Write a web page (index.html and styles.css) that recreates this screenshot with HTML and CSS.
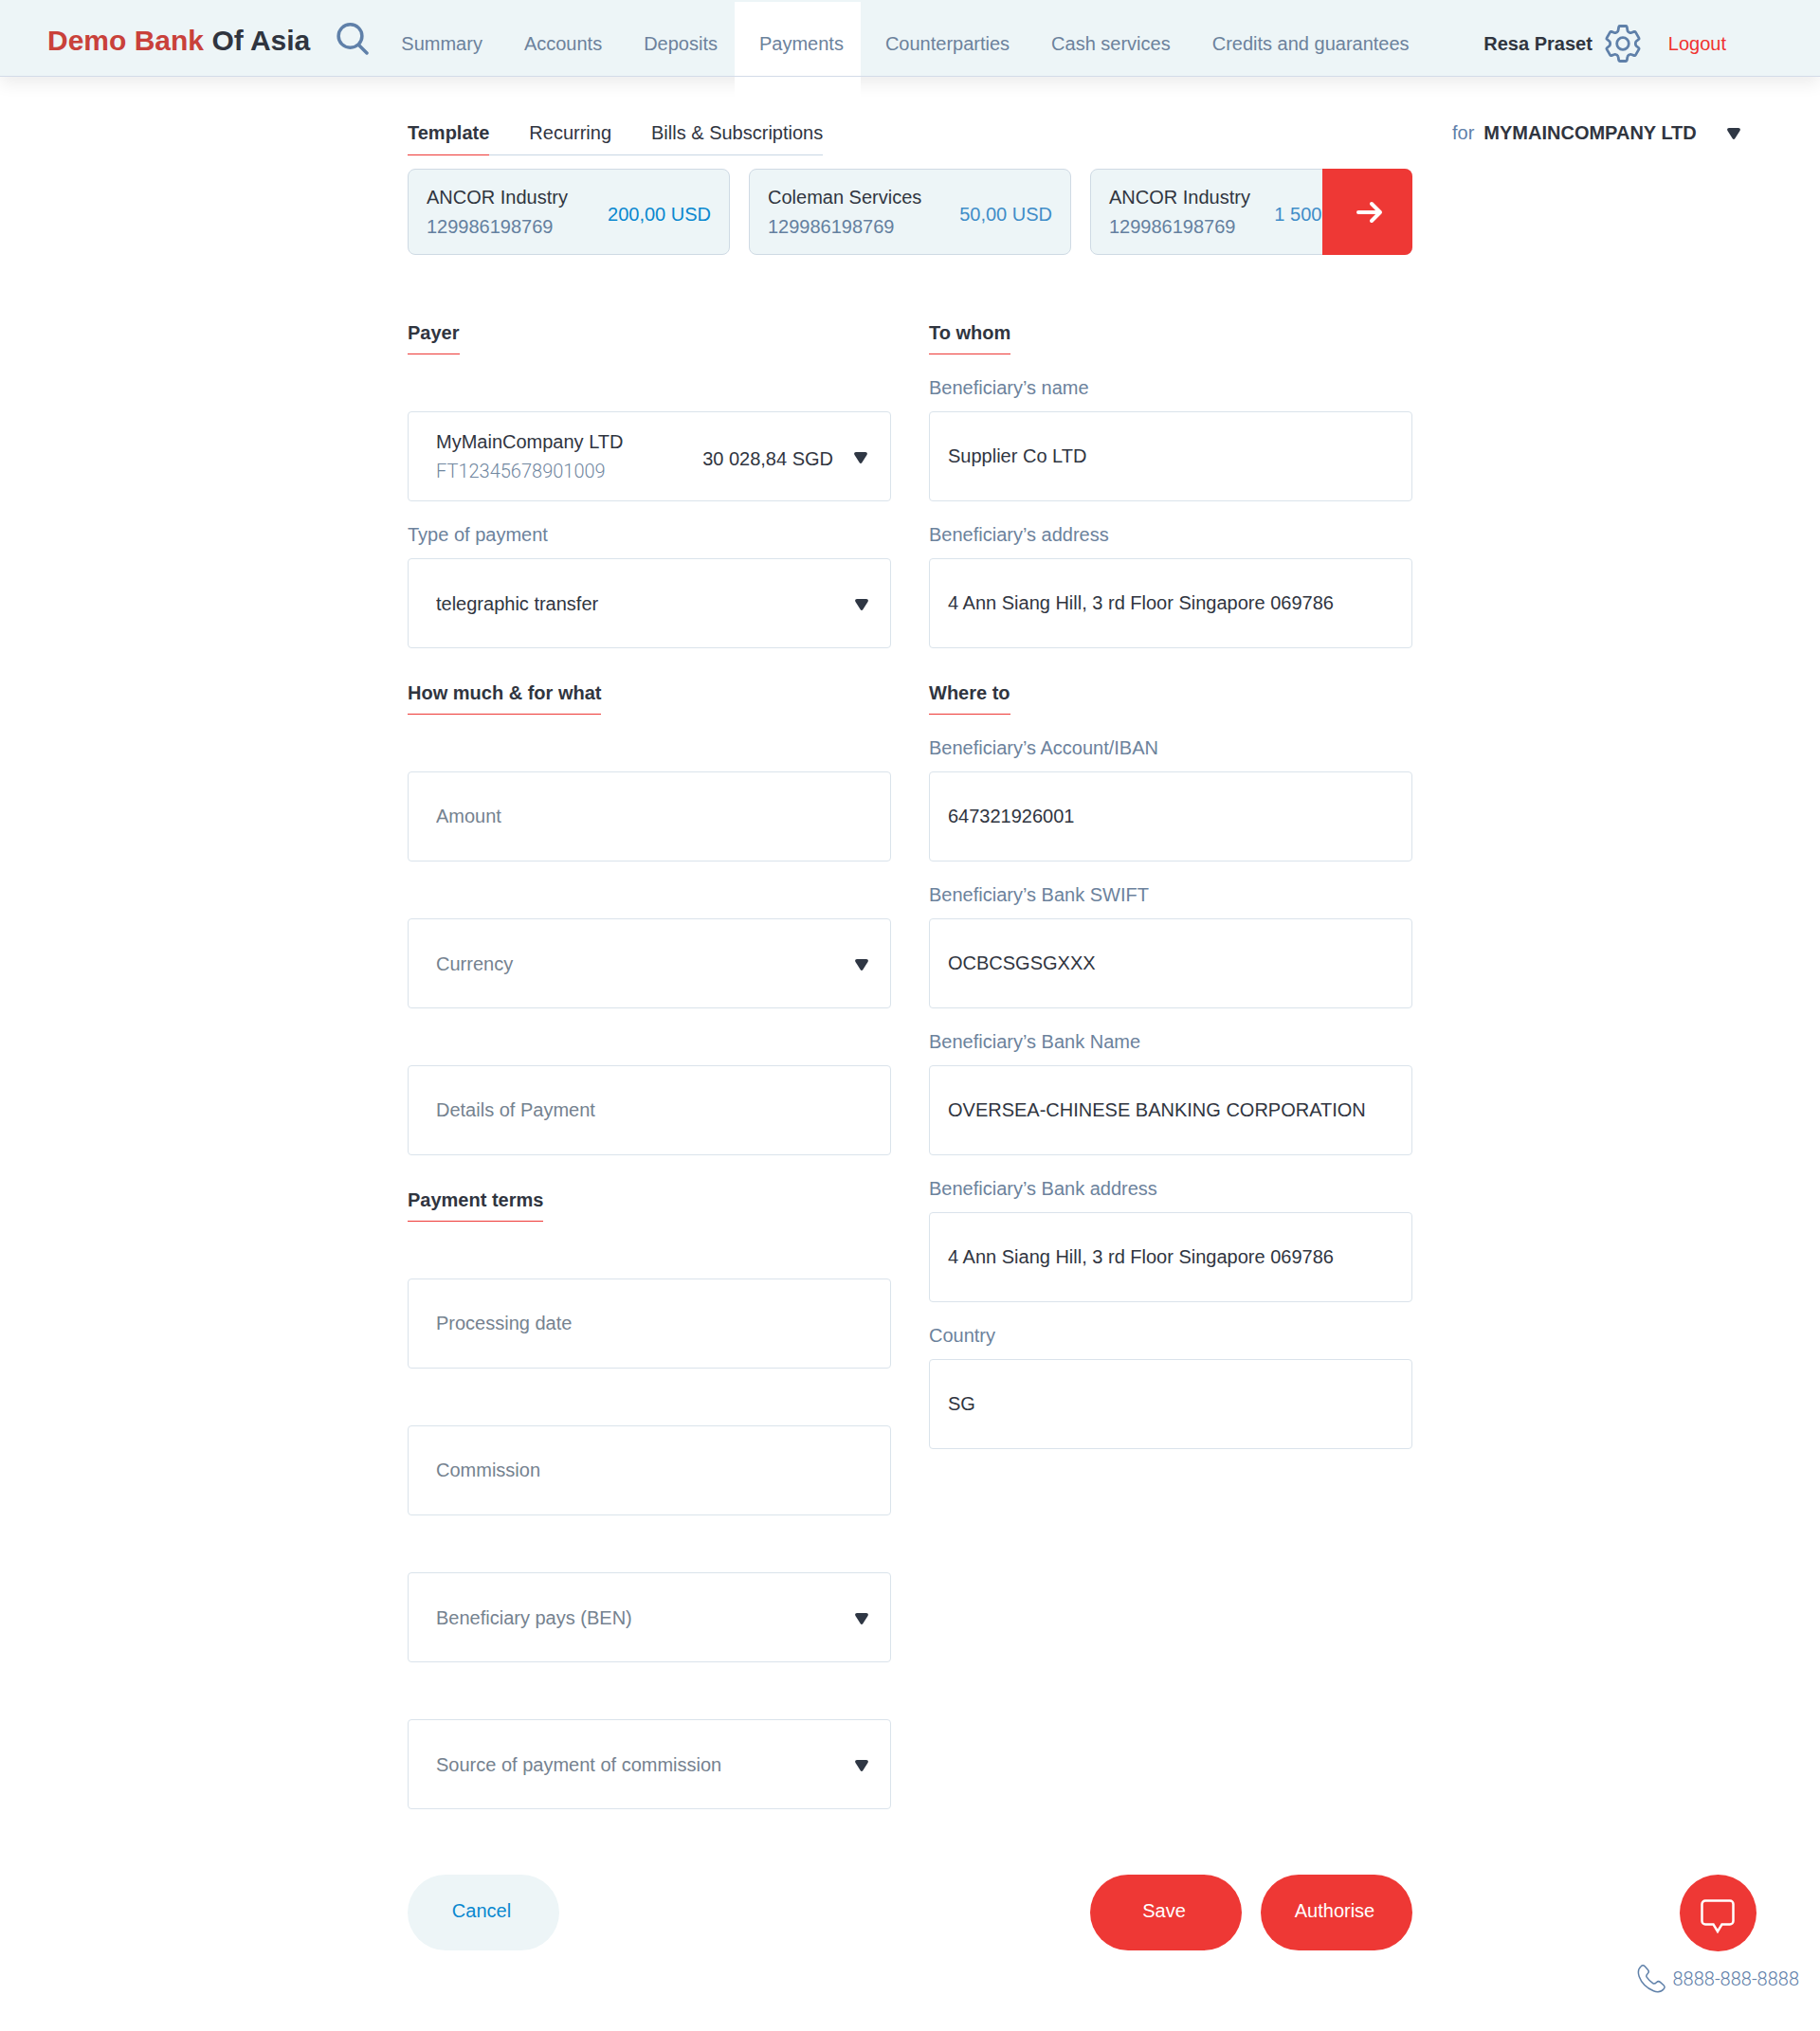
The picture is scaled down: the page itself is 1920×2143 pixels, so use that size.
FILE: index.html
```html
<!DOCTYPE html>
<html lang="en">
<head>
<meta charset="utf-8">
<meta name="viewport" content="width=device-width, initial-scale=1">
<title>Payments – Demo Bank Of Asia</title>
<link rel="stylesheet" href="styles.css">
</head>
<body>
<svg class="sprite" width="0" height="0" aria-hidden="true">
  <symbol id="caret" viewBox="0 0 14 12"><path d="M2 0h10c1.600 0 2.400 1.600 1.500 2.900L8.400 11c-.7 1.200-2.100 1.200-2.800 0L.5 2.900C-.4 1.600.4 0 2 0z"/></symbol>
</svg>

<header class="topbar">
  <div class="topbar__brand">
    <a class="brand" href="#"><span class="brand__accent">Demo Bank</span> Of Asia</a>
    <button class="icon-button" type="button" aria-label="Search">
      <svg width="34" height="38" viewBox="0 0 34 38" fill="none" stroke="currentColor" stroke-width="3.500" stroke-linecap="round"><ellipse cx="14.500" cy="14" rx="12.400" ry="12.200"/><path d="M23.500 23.500l8.500 8.500"/></svg>
    </button>
  </div>
  <nav class="mainnav" aria-label="Main">
    <a class="mainnav__link" href="#">Summary</a>
    <a class="mainnav__link" href="#">Accounts</a>
    <a class="mainnav__link" href="#">Deposits</a>
    <a class="mainnav__link mainnav__link--active" href="#" aria-current="page">Payments</a>
    <a class="mainnav__link" href="#">Counterparties</a>
    <a class="mainnav__link" href="#">Cash services</a>
    <a class="mainnav__link" href="#">Credits and guarantees</a>
  </nav>
  <div class="user">
    <span class="user__name">Resa Praset</span>
    <button class="icon-button" type="button" aria-label="Settings">
      <svg width="40" height="40" viewBox="0 0 40 40" fill="none" stroke="currentColor" stroke-width="2.800" stroke-linejoin="round"><path d="M16.800 1.500h6.400c.6 0 1 .3 1.100.9l.6 3.600c.1.800.4 1.300 1 1.700l1.200.7c.6.400 1.200.4 1.900.1l3-1.100c.6-.2 1.100 0 1.400.5l3.600 6.200c.3.500.2 1-.3 1.400l-2.500 2c-.6.500-.8 1-.8 1.700v1.600c0 .7.200 1.200.8 1.700l2.500 2c.5.400.6.900.3 1.400l-3.600 6.200c-.3.500-.8.700-1.400.5l-3-1.100c-.7-.3-1.300-.3-1.900.1l-1.200.7c-.6.400-.9.900-1 1.700l-.6 3.600c-.1.600-.5.900-1.100.9h-6.400c-.6 0-1-.3-1.100-.9l-.6-3.600c-.1-.8-.4-1.300-1-1.700l-1.200-.7c-.6-.4-1.200-.4-1.900-.1l-3 1.100c-.6.200-1.100 0-1.400-.5L3 25.900c-.3-.5-.2-1 .3-1.400l2.500-2c.6-.5.8-1 .8-1.700v-1.600c0-.7-.2-1.200-.8-1.700l-2.500-2c-.5-.4-.6-.9-.3-1.400l3.600-6.200c.3-.5.800-.7 1.400-.5l3 1.100c.7.300 1.300.3 1.900-.1l1.200-.7c.6-.4.900-.9 1-1.700l.6-3.600c.1-.6.500-.9 1.100-.9z"/><circle cx="20" cy="20" r="6.300"/></svg>
    </button>
    <a class="user__logout" href="#">Logout</a>
  </div>
</header>

<main class="page">
  <form class="payment">
    <div class="tabs">
      <a class="tabs__item tabs__item--active" href="#">Template</a>
      <a class="tabs__item" href="#">Recurring</a>
      <a class="tabs__item" href="#">Bills &amp; Subscriptions</a>
    </div>

    <div class="templates">
      <a class="card" href="#">
        <span class="account"><span>ANCOR Industry</span><span class="account__number">129986198769</span></span>
        <span class="amount amount--bright">200,00 USD</span>
      </a>
      <a class="card" href="#">
        <span class="account"><span>Coleman Services</span><span class="account__number">129986198769</span></span>
        <span class="amount">50,00 USD</span>
      </a>
      <a class="card" href="#">
        <span class="account"><span>ANCOR Industry</span><span class="account__number">129986198769</span></span>
        <span class="amount">1 500,00 USD</span>
      </a>
      <button class="templates__next" type="button" aria-label="More templates">
        <svg width="32" height="24" viewBox="0 0 32 24" fill="none" stroke="currentColor" stroke-width="4" stroke-linecap="round" stroke-linejoin="round"><path d="M4 12h23M18 3l9 9-9 9"/></svg>
      </button>
    </div>

    <div class="columns">
      <div class="column column--payer">
        <h2 class="section"><span class="section__text">Payer</span></h2>
        <div class="field">
          <div class="control account-box">
            <span class="account"><span>MyMainCompany LTD</span><span class="account__iban">FT12345678901009</span></span>
            <span class="amount amount--dark">30 028,84 SGD</span>
            <select class="account-box__select" aria-label="Payer account"><option>MyMainCompany LTD</option></select>
            <svg class="caret" aria-hidden="true"><use href="#caret"/></svg>
          </div>
        </div>
        <div class="field">
          <label class="field__label" for="type">Type of payment</label>
          <div class="control">
            <select class="input" id="type"><option>telegraphic transfer</option></select>
            <svg class="caret" aria-hidden="true"><use href="#caret"/></svg>
          </div>
        </div>

        <h2 class="section"><span class="section__text">How much &amp; for what</span></h2>
        <div class="field">
          <div class="control"><input class="input" type="text" placeholder="Amount" aria-label="Amount"></div>
        </div>
        <div class="field">
          <div class="control">
            <select class="input input--empty" aria-label="Currency"><option>Currency</option></select>
            <svg class="caret" aria-hidden="true"><use href="#caret"/></svg>
          </div>
        </div>
        <div class="field">
          <div class="control"><input class="input" type="text" placeholder="Details of Payment" aria-label="Details of Payment"></div>
        </div>

        <h2 class="section"><span class="section__text">Payment terms</span></h2>
        <div class="field">
          <div class="control"><input class="input" type="text" placeholder="Processing date" aria-label="Processing date"></div>
        </div>
        <div class="field">
          <div class="control"><input class="input" type="text" placeholder="Commission" aria-label="Commission"></div>
        </div>
        <div class="field">
          <div class="control">
            <select class="input input--empty" aria-label="Who pays the commission"><option>Beneficiary pays (BEN)</option></select>
            <svg class="caret" aria-hidden="true"><use href="#caret"/></svg>
          </div>
        </div>
        <div class="field">
          <div class="control">
            <select class="input input--empty" aria-label="Source of payment of commission"><option>Source of payment of commission</option></select>
            <svg class="caret" aria-hidden="true"><use href="#caret"/></svg>
          </div>
        </div>
      </div>

      <div class="column column--beneficiary">
        <h2 class="section"><span class="section__text">To whom</span></h2>
        <div class="field">
          <label class="field__label" for="b-name">Beneficiary’s name</label>
          <div class="control"><input class="input" id="b-name" type="text" value="Supplier Co LTD"></div>
        </div>
        <div class="field">
          <label class="field__label" for="b-address">Beneficiary’s address</label>
          <div class="control"><input class="input" id="b-address" type="text" value="4 Ann Siang Hill, 3 rd Floor Singapore 069786"></div>
        </div>

        <h2 class="section"><span class="section__text">Where to</span></h2>
        <div class="field">
          <label class="field__label" for="b-iban">Beneficiary’s Account/IBAN</label>
          <div class="control"><input class="input" id="b-iban" type="text" value="647321926001"></div>
        </div>
        <div class="field">
          <label class="field__label" for="b-swift">Beneficiary’s Bank SWIFT</label>
          <div class="control"><input class="input" id="b-swift" type="text" value="OCBCSGSGXXX"></div>
        </div>
        <div class="field">
          <label class="field__label" for="b-bank">Beneficiary’s Bank Name</label>
          <div class="control"><input class="input" id="b-bank" type="text" value="OVERSEA-CHINESE BANKING CORPORATION"></div>
        </div>
        <div class="field">
          <label class="field__label" for="b-bank-address">Beneficiary’s Bank address</label>
          <div class="control"><input class="input" id="b-bank-address" type="text" value="4 Ann Siang Hill, 3 rd Floor Singapore 069786"></div>
        </div>
        <div class="field">
          <label class="field__label" for="b-country">Country</label>
          <div class="control"><input class="input" id="b-country" type="text" value="SG"></div>
        </div>
      </div>
    </div>

    <div class="actions">
      <button class="button button--light" type="button">Cancel</button>
      <button class="button" type="button">Save</button>
      <button class="button" type="submit">Authorise</button>
    </div>
  </form>

  <aside class="side">
    <div class="company">
      <label class="company__label" for="company">for</label>
      <div class="company__control">
        <select class="company__select" id="company"><option>MYMAINCOMPANY LTD</option></select>
        <svg class="caret caret--company" aria-hidden="true"><use href="#caret"/></svg>
      </div>
    </div>
    <div class="contact">
      <button class="contact__chat" type="button" aria-label="Open chat">
        <svg width="36" height="36" viewBox="0 0 36 36" fill="none" stroke="currentColor" stroke-width="2.500" stroke-linejoin="miter"><path d="M5 1.500h26a3.500 3.500 0 0 1 3.500 3.500v18a3.500 3.500 0 0 1-3.500 3.500h-8.500L18 34l-4.500-7.500H5A3.500 3.500 0 0 1 1.500 23V5A3.500 3.500 0 0 1 5 1.500z"/></svg>
      </button>
      <a class="contact__phone" href="tel:88888888888">
        <svg width="30" height="30" viewBox="0 0 30 30" fill="none" stroke="currentColor" stroke-width="1.500" stroke-linejoin="round"><path d="M4.200 1.800c1.200-1.300 2.800-1.300 4 0l3.300 3.700c1.100 1.300 1 2.600-.1 3.700-1.700 1.600-2.300 2.400-1.200 4 1.700 2.500 4 4.800 6.500 6.500 1.600 1.100 2.400.5 4-1.200 1.100-1.100 2.400-1.200 3.700-.1l3.700 3.300c1.300 1.200 1.300 2.800 0 4-2.800 3.200-6.600 3.700-10.600 2C9.600 24.300 4.500 18.900 2.200 12.400.8 8.400 1 4.600 4.200 1.800z"/></svg>
        <span>8888-888-8888</span>
      </a>
    </div>
  </aside>
</main>
</body>
</html>
```
FILE: styles.css
```css
:root {
  --ink: #30353f;
  --slate: #6c829c;
  --steel: #5f80a9;
  --muted: #75828f;
  --red: #ee3835;
  --blue: #0a88cf;
  --pale: #edf5f7;
  --line: #dae3eb;
}

* {
  box-sizing: border-box;
}

body {
  margin: 0;
  background: #fff;
  color: var(--ink);
  font: 20px/24px "Liberation Sans", Arial, sans-serif;
}

a {
  color: inherit;
  text-decoration: none;
}

button,
input,
select {
  margin: 0;
  font: inherit;
  color: inherit;
}

button {
  border: 0;
  cursor: pointer;
}

svg {
  display: block;
  flex: none;
}

.sprite {
  position: absolute;
}

/* Top bar */
.topbar {
  display: flex;
  min-height: 81px;
  padding: 0 99px 0 50px;
  background: var(--pale);
  border-bottom: 1px solid #d3dbe8;
  box-shadow: 0 8px 16px rgba(0, 0, 0, 0.07);
}

.topbar__brand {
  display: flex;
  align-items: center;
  gap: 28px;
  padding-top: 6px;
}

.brand {
  font-size: 30px;
  line-height: 36px;
  font-weight: 700;
  white-space: nowrap;
}

.brand__accent {
  color: #c9413a;
}

.icon-button {
  padding: 0;
  background: none;
  color: var(--steel);
}

.mainnav {
  display: flex;
  margin: 2px 0 0 8px;
  color: var(--slate);
  white-space: nowrap;
}

.mainnav__link {
  display: flex;
  align-items: center;
  padding: 10px 18px 0 26px;
}

.mainnav__link--active {
  position: relative;
  background: #fff;
}

/* keeps the active tab white across the bar's shadow */
.mainnav__link--active::after {
  content: "";
  position: absolute;
  top: calc(100% + 1px);
  left: 0;
  right: 0;
  height: 22px;
  background: #fff;
}

.user {
  display: flex;
  align-items: center;
  margin-left: auto;
  padding-top: 12px;
  white-space: nowrap;
}

.user__name {
  margin-right: 12px;
  font-weight: 700;
}

.user__logout {
  margin-left: 28px;
  color: #f0332f;
}

/* Page */
.page {
  display: grid;
  grid-template-columns: 1fr minmax(0, 1060px) 1fr;
  padding: 47px 0 41px;
}

.payment {
  grid-column: 2;
}

.tabs {
  display: inline-flex;
  gap: 42px;
  border-bottom: 1px solid #c9d6e4;
  vertical-align: top;
}

.tabs__item {
  margin-bottom: -1px;
  padding-bottom: 11px;
  border-bottom: 1px solid transparent;
}

.tabs__item--active {
  border-color: var(--red);
  font-weight: 700;
}

/* Payment templates */
.templates {
  position: relative;
  display: grid;
  grid-template-columns: repeat(3, 1fr);
  gap: 20px;
  margin-top: 14px;
}

.card {
  display: flex;
  align-items: center;
  justify-content: space-between;
  height: 91px;
  padding: 0 19px;
  background: var(--pale);
  border: 1px solid #cfdae4;
  border-radius: 8px;
  white-space: nowrap;
}

.account {
  display: flex;
  flex-direction: column;
  line-height: 31px;
}

.account__number {
  color: #64809f;
}

.account__iban {
  color: #71879f;
  font-family: Roboto, "Liberation Sans", sans-serif;
  font-weight: 300;
}

.amount {
  padding-top: 4px;
  color: #3f8dc8;
}

.amount--bright {
  color: var(--blue);
}

.amount--dark {
  color: var(--ink);
}

.templates__next {
  position: absolute;
  top: 0;
  right: 0;
  bottom: 0;
  display: flex;
  align-items: center;
  justify-content: center;
  width: 95px;
  padding: 0 0 0 4px;
  background: var(--red);
  border-radius: 0 8px 8px 0;
  color: #fff;
}

/* Form */
.columns {
  display: grid;
  grid-template-columns: 1fr 1fr;
  gap: 40px;
  margin-top: 35px;
}

.column--payer {
  --inset: 29px;
}

.column--beneficiary {
  --inset: 19px;
}

.section {
  display: flex;
  align-items: flex-end;
  height: 70px;
  margin: 0;
  font-size: 20px;
}

.section__text {
  padding-bottom: 10px;
  border-bottom: 1px solid var(--red);
}

.field {
  display: flex;
  flex-direction: column;
  justify-content: flex-end;
  height: 155px;
}

.field__label {
  padding-bottom: 13px;
  color: var(--slate);
}

.control {
  position: relative;
  height: 95px;
}

.input,
.account-box {
  width: 100%;
  height: 95px;
  padding: 0 24px 0 var(--inset);
  background: #fff;
  border: 1px solid var(--line);
  border-radius: 4px;
}

.input {
  appearance: none;
}

.input::placeholder {
  color: var(--muted);
  opacity: 1;
}

.input--empty {
  color: var(--muted);
}

.account-box {
  display: flex;
  align-items: center;
  justify-content: space-between;
  padding-right: 60px;
}

.account-box__select {
  position: absolute;
  inset: 0;
  width: 100%;
  opacity: 0;
}

.caret {
  position: absolute;
  top: 50%;
  right: 24px;
  width: 14px;
  height: 12px;
  margin-top: -5px;
  fill: #2f3744;
  pointer-events: none;
}

.actions {
  display: flex;
  gap: 20px;
  padding: 69px 0 45px;
}

.button {
  width: 160px;
  height: 80px;
  padding: 0 4px 4px 0;
  background: var(--red);
  border-radius: 40px;
  color: #fff;
}

.button--light {
  margin-right: auto;
  background: var(--pale);
  color: var(--blue);
}

/* Side column */
.side {
  grid-column: 3;
  display: flex;
  flex-direction: column;
  justify-content: space-between;
  padding: 0 22px 0 42px;
}

.company {
  display: flex;
  gap: 10px;
}

.company__label {
  color: var(--steel);
}

.company__control {
  position: relative;
}

.company__select {
  height: 24px;
  padding: 0 46px 0 0;
  appearance: none;
  background: none;
  border: 0;
  font-weight: 700;
}

.caret--company {
  right: 0;
}

.contact {
  display: flex;
  flex-direction: column;
  align-items: center;
  gap: 14px;
  align-self: flex-end;
}

.contact__chat {
  display: flex;
  align-items: center;
  justify-content: center;
  width: 81px;
  height: 81px;
  padding: 6px 0 0;
  background: var(--red);
  border-radius: 50%;
  color: #fff;
}

.contact__phone {
  display: flex;
  align-items: center;
  gap: 8px;
  color: var(--steel);
  font-family: Roboto, "Liberation Sans", sans-serif;
  font-weight: 300;
}

@media (max-width: 1500px) {
  .topbar,
  .mainnav {
    flex-wrap: wrap;
  }

  .page {
    grid-template-columns: minmax(0, 1fr);
    padding-left: 20px;
    padding-right: 20px;
  }

  .payment,
  .side {
    grid-column: 1;
  }

  .side {
    gap: 40px;
  }
}
```
